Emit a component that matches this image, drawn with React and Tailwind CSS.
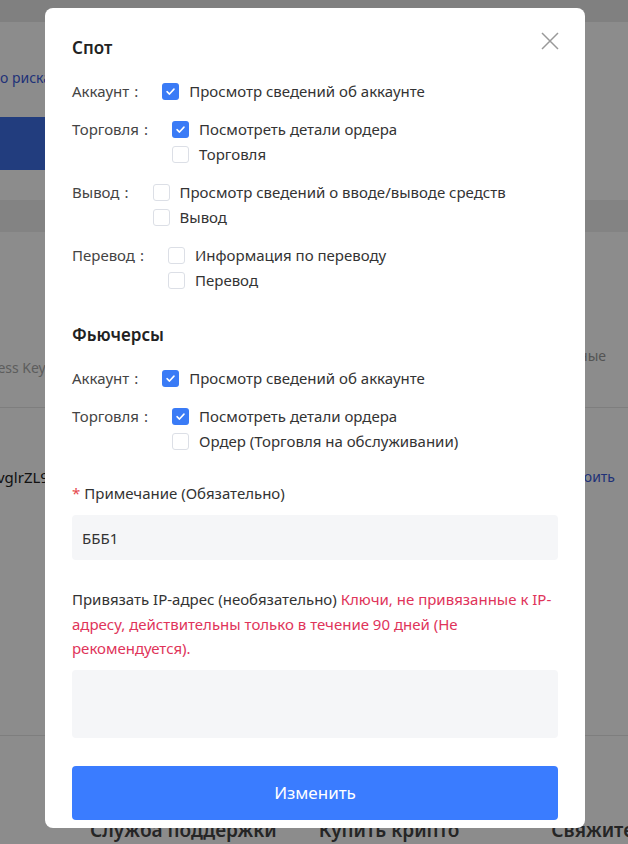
import React, { useState } from 'react';

const font = { fontFamily: '"Noto Sans", "Open Sans", sans-serif' };

function Check({ checked, label, onToggle }) {
  return (
    <label className="flex items-center h-[25px] cursor-pointer" onClick={onToggle}>
      <span
        className={`w-[17px] h-[17px] rounded-[3px] flex items-center justify-center shrink-0 ${
          checked ? 'bg-[#3a7bf6]' : 'bg-white border border-[#dcdfe6]'
        }`}
      >
        {checked && (
          <svg viewBox="0 0 12 12" className="w-[11px] h-[11px]" fill="none">
            <path d="M2.2 6.2 4.9 8.8 9.8 3.4" stroke="#fff" strokeWidth="1.7" strokeLinecap="round" strokeLinejoin="round" />
          </svg>
        )}
      </span>
      <span className="ml-[10px] text-[15px] text-[#333]">{label}</span>
    </label>
  );
}

function PermRow({ label, items, state, toggle }) {
  return (
    <div className="flex items-start">
      <span className="h-[25px] flex items-center text-[15px] text-[#444] mr-[24px]">
        {label}
        <span className="ml-[5px]">:</span>
      </span>
      <div className="flex flex-col">
        {items.map((it) => (
          <Check key={it.id} checked={state[it.id]} label={it.label} onToggle={() => toggle(it.id)} />
        ))}
      </div>
    </div>
  );
}

function Section({ title, rows, state, toggle }) {
  return (
    <div>
      <h3 className="text-[17px] font-semibold text-[#222] leading-[24px]">{title}</h3>
      <div className="mt-[19px] flex flex-col gap-[13px]">
        {rows.map((r) => (
          <PermRow key={r.label} label={r.label} items={r.items} state={state} toggle={toggle} />
        ))}
      </div>
    </div>
  );
}

const spotRows = [
  { label: 'Аккаунт', items: [{ id: 's_acc', label: 'Просмотр сведений об аккаунте' }] },
  {
    label: 'Торговля',
    items: [
      { id: 's_ord', label: 'Посмотреть детали ордера' },
      { id: 's_trd', label: 'Торговля' },
    ],
  },
  {
    label: 'Вывод',
    items: [
      { id: 's_wdi', label: 'Просмотр сведений о вводе/выводе средств' },
      { id: 's_wd', label: 'Вывод' },
    ],
  },
  {
    label: 'Перевод',
    items: [
      { id: 's_tri', label: 'Информация по переводу' },
      { id: 's_tr', label: 'Перевод' },
    ],
  },
];

const futRows = [
  { label: 'Аккаунт', items: [{ id: 'f_acc', label: 'Просмотр сведений об аккаунте' }] },
  {
    label: 'Торговля',
    items: [
      { id: 'f_ord', label: 'Посмотреть детали ордера' },
      { id: 'f_trd', label: 'Ордер (Торговля на обслуживании)' },
    ],
  },
];

export default function App() {
  const [state, setState] = useState({ s_acc: true, s_ord: true, f_acc: true, f_ord: true });
  const [note, setNote] = useState('БББ1');
  const [ip, setIp] = useState('');
  const toggle = (id) => setState((p) => ({ ...p, [id]: !p[id] }));

  return (
    <div className="relative w-[628px] h-[844px] overflow-hidden bg-white" style={font}>
      {/* page behind the modal */}
      <div>
        <div className="h-[22px] bg-[#e9e9e9]" />
        <div className="mt-[45px] text-[14px] text-[#3b5bdb] leading-[22px]">о рисках</div>
        <div className="mt-[28px] w-[320px] h-[53px] bg-[#3e6fe6] rounded-r-md" />
        <div className="mt-[30px] h-[32px] bg-[#eeeeee]" />
        <div className="mt-[113px] flex justify-between items-end pr-[22px]">
          <span className="text-[14px] text-[#aaa] -ml-[25px]">Access Key</span>
          <span className="text-[14px] text-[#999] mb-[12px]">Права доступа, разрешённые</span>
        </div>
        <div className="mt-[29px] h-px bg-[#e6e6e6]" />
        <div className="mt-[58px] flex justify-between pr-[13px]">
          <span className="text-[15px] text-[#222] -ml-[3px]">vglrZL9</span>
          <span className="text-[14px] text-[#3b5bdb]">Настроить</span>
        </div>
        <div className="mt-[246px] h-px bg-[#e6e6e6]" />
        <div className="mt-[80px] flex pl-[90px] text-[19px] font-semibold text-[#444] whitespace-nowrap">
          <span>Служба поддержки</span>
          <span className="ml-[42px]">Купить крипто</span>
          <span className="ml-[92px]">Свяжитесь</span>
        </div>
      </div>

      {/* overlay */}
      <div className="absolute inset-0 bg-black/45" />

      {/* modal */}
      <div className="absolute left-[45px] top-[8px] w-[540px] bg-white rounded-[8px] px-[27px] pt-[28px] pb-[8px]">
        <button className="absolute right-[26px] top-[24px] w-[18px] h-[18px] text-[#999]" aria-label="close">
          <svg viewBox="0 0 18 18" className="w-[18px] h-[18px] block" fill="none">
            <path d="M1 1 17 17M17 1 1 17" stroke="currentColor" strokeWidth="1.5" />
          </svg>
        </button>

        <Section title="Спот" rows={spotRows} state={state} toggle={toggle} />
        <div className="mt-[30px]">
          <Section title="Фьючерсы" rows={futRows} state={state} toggle={toggle} />
        </div>

        <div className="mt-[28px] text-[15px] text-[#333] leading-[22px]">
          <span className="text-[#e5484d] mr-[4px]">*</span>Примечание (Обязательно)
        </div>
        <input
          value={note}
          onChange={(e) => setNote(e.target.value)}
          className="mt-[11px] w-full h-[45px] bg-[#f5f6f8] rounded-[4px] px-[10px] text-[15px] text-[#333] outline-none"
        />

        <p className="mt-[27px] text-[15px] leading-[24.5px] text-[#333]">
          Привязать IP-адрес (необязательно){' '}
          <span className="text-[#e0345a]">
            Ключи, не привязанные к IP-
            <br />
            адресу, действительны только в течение 90 дней (Не
            <br />
            рекомендуется).
          </span>
        </p>
        <textarea
          value={ip}
          onChange={(e) => setIp(e.target.value)}
          className="mt-[9px] block w-full h-[68px] bg-[#f5f6f8] rounded-[4px] px-[10px] py-[8px] text-[15px] outline-none resize-none"
        />

        <button className="mt-[28px] w-full h-[54px] bg-[#3a7cff] rounded-[4px] text-white text-[17px]">
          Изменить
        </button>
      </div>
    </div>
  );
}
